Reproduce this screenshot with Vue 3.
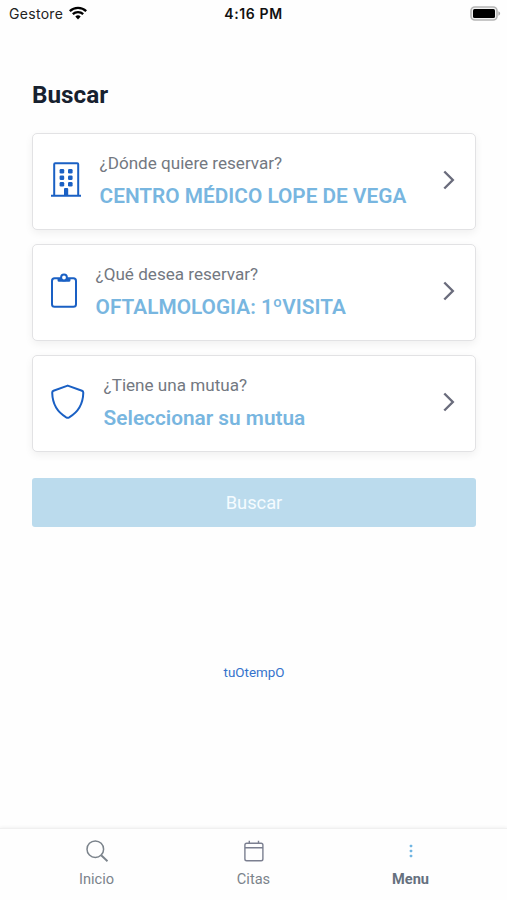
<template>
  <div class="screen">
    <header class="status">
      <div class="carrier">
        <span>Gestore</span>
        <svg width="18" height="14" viewBox="0 0 18 14" fill="none" stroke="#000" stroke-width="2.3">
          <path d="M.8 5.1C5.3.8 12.7.8 17.2 5.1" />
          <path d="M3.800 8.200c2.900-2.700 7.500-2.700 10.400 0" />
          <path d="M6.300 10.500a3.900 3.900 0 0 1 5.400 0L9 13.400z" fill="#000" stroke="none" />
        </svg>
      </div>
      <div class="clock">4:16 PM</div>
      <div class="battery">
        <svg width="31" height="15" viewBox="0 0 31 15">
          <rect x="1" y="1" width="26" height="13" rx="3.8" fill="#f2f2f2" stroke="#b5b5b5" stroke-width="1.6" />
          <rect x="3" y="3" width="22" height="9" rx="1.5" fill="#000" />
          <path d="M28.400 5.300c2.300.8 2.300 3.600 0 4.400z" fill="#aaa" />
        </svg>
      </div>
    </header>

    <main class="content">
      <h1>Buscar</h1>

      <div v-for="card in cards" :key="card.icon" class="card">
        <svg v-if="card.icon === 'building'" class="icon" width="30" height="36" viewBox="0 0 30 36" fill="none" stroke="#1a60c4" stroke-width="2">
          <path d="M3.200 34V2.300q0-1 1-1h22q1 0 1 1V34M0 33.800h30" />
          <g fill="#1a60c4" stroke="none">
            <rect x="8.600" y="7" width="4.600" height="4.600" rx="1.300" />
            <rect x="17" y="7" width="4.600" height="4.600" rx="1.300" />
            <rect x="8.600" y="13.500" width="4.600" height="4.600" rx="1.300" />
            <rect x="17" y="13.500" width="4.600" height="4.600" rx="1.300" />
            <rect x="8.600" y="20" width="4.600" height="4.600" rx="1.300" />
            <rect x="17" y="20" width="4.600" height="4.600" rx="1.300" />
            <path d="M13 34v-7q0-1 1-1h2.200q1 0 1 1v7z" />
          </g>
        </svg>
        <svg v-else-if="card.icon === 'clipboard'" class="icon" width="26" height="36" viewBox="0 0 26 36" fill="none" stroke="#1a60c4" stroke-width="2">
          <rect x="1" y="5.300" width="24" height="28.500" rx="2.600" />
          <path d="M6.500 5h13v2.200q0 1.600-1.600 1.600H8.100q-1.600 0-1.600-1.600z" fill="#1a60c4" stroke="none" />
          <circle cx="13" cy="4.500" r="2.900" fill="#fff" />
        </svg>
        <svg v-else class="icon" width="34" height="36" viewBox="0 0 34 36" fill="none" stroke="#1a60c4" stroke-width="2" stroke-linejoin="round">
          <path d="M16.700 1.600L31 6.800Q32.300 7.300 32.300 8.800C32 19.500 27.500 28 18.200 33.300Q16.700 34.100 15.200 33.300C6 28 1.500 19.500 1.200 8.800Q1.200 7.300 2.500 6.800Z" />
        </svg>
        <div class="text">
          <div class="question">{{ card.question }}</div>
          <div class="answer">{{ card.answer }}</div>
        </div>
        <svg class="chevron" width="12" height="20" viewBox="0 0 12 20" fill="none" stroke="#6a6c7c" stroke-width="2.4">
          <path d="M1.300 1.500L9.800 10l-8.500 8.500" />
        </svg>
      </div>

      <button class="search" type="button">Buscar</button>
      <a class="brand">tuOtempO</a>
    </main>

    <nav class="tabs">
      <div class="tab">
        <svg width="24" height="24" viewBox="0 0 24 24" fill="none" stroke="#7b838b" stroke-width="1.5">
          <circle cx="10.300" cy="10.200" r="8.300" />
          <path d="M16.200 16.200l6.300 6" stroke-width="1.9" />
        </svg>
        <span>Inicio</span>
      </div>
      <div class="tab">
        <svg width="24" height="24" viewBox="0 0 24 24" fill="none" stroke="#7b7f90" stroke-width="1.4">
          <rect x="2.900" y="4.300" width="18" height="17.500" rx="1.800" />
          <path d="M3 8.700h18M7.300 1.700v2.500M16.500 1.700v2.500" />
        </svg>
        <span>Citas</span>
      </div>
      <div class="tab active">
        <svg width="24" height="24" viewBox="0 0 24 24" fill="#70b5e2">
          <rect x="10.700" y="5.700" width="2.600" height="2.600" rx=".8" />
          <rect x="10.700" y="10.700" width="2.600" height="2.600" rx=".8" />
          <rect x="10.700" y="15.700" width="2.600" height="2.600" rx=".8" />
        </svg>
        <span>Menu</span>
      </div>
    </nav>
  </div>
</template>

<script setup>
const cards = [
  { icon: 'building', question: '¿Dónde quiere reservar?', answer: 'CENTRO MÉDICO LOPE DE VEGA' },
  { icon: 'clipboard', question: '¿Qué desea reservar?', answer: 'OFTALMOLOGIA: 1ºVISITA' },
  { icon: 'shield', question: '¿Tiene una mutua?', answer: 'Seleccionar su mutua' },
];
</script>

<style>
body {
  margin: 0;
  background: #fefefe;
}
</style>

<style scoped>
.screen {
  display: flex;
  flex-direction: column;
  height: 900px;
  background: #fefefe;
  font-family: Roboto, 'Liberation Sans', sans-serif;
}

.status {
  display: grid;
  grid-template-columns: 1fr auto 1fr;
  align-items: center;
  box-sizing: border-box;
  height: 28px;
  padding: 0 6px 0 9px;
  font-family: Inter, 'Liberation Sans', sans-serif;
  font-size: 14px;
  line-height: 18px;
  color: #222;
}

.carrier {
  display: flex;
  align-items: center;
  gap: 6px;
  margin-top: -1px;
  letter-spacing: 0.3px;
}

.carrier svg {
  margin-top: -2px;
}

.clock {
  margin: -1px 3px 0 0;
  font-weight: 600;
  letter-spacing: 0.6px;
  color: #111;
}

.battery {
  display: flex;
  justify-content: flex-end;
  margin-top: -2px;
}

.content {
  display: flex;
  flex: 1;
  flex-direction: column;
  padding: 0 31px 0 32px;
}

h1 {
  margin: 52px 0 22.5px;
  font-size: 24.3px;
  font-weight: 700;
  line-height: 30px;
  color: #17212f;
}

.card {
  display: flex;
  align-items: center;
  box-sizing: border-box;
  height: 97px;
  margin-bottom: 14px;
  padding: 0 20px 0 18px;
  border: 1px solid #e2e2e4;
  border-radius: 5px;
  background: #fff;
  box-shadow: 0 3px 9px rgba(0, 0, 0, 0.06);
}

.icon {
  flex: none;
  margin-top: -2px;
}

.text {
  flex: 1;
  margin: -1px 0 0 18.6px;
}

.question {
  font-size: 17.1px;
  line-height: 24px;
  color: #737881;
}

.answer {
  margin-top: 7px;
  font-size: 20.8px;
  font-weight: 600;
  line-height: 28px;
  color: #78b6e0;
  white-space: nowrap;
}

.chevron {
  flex: none;
  margin-top: -2px;
}

.search {
  flex: none;
  height: 49px;
  margin-top: 12.5px;
  padding: 0;
  border: 0;
  border-radius: 3px;
  background: #bbdbed;
  font-family: inherit;
  font-size: 18.3px;
  color: #f5fbff;
}

.brand {
  align-self: center;
  margin-top: 137px;
  font-size: 13.4px;
  line-height: 18px;
  color: #3472cc;
}

.tabs {
  display: flex;
  box-sizing: border-box;
  height: 72px;
  padding: 10px 18px 0;
  border-top: 1px solid #f0f0f0;
  background: #fefefe;
  box-shadow: 0 -1px 3px rgba(0, 0, 0, 0.05);
}

.tab {
  display: flex;
  flex: 1;
  flex-direction: column;
  align-items: center;
  gap: 6px;
  font-size: 14.6px;
  line-height: 20px;
  color: #7b838b;
}

.active {
  font-weight: 700;
  color: #65707e;
}
</style>
